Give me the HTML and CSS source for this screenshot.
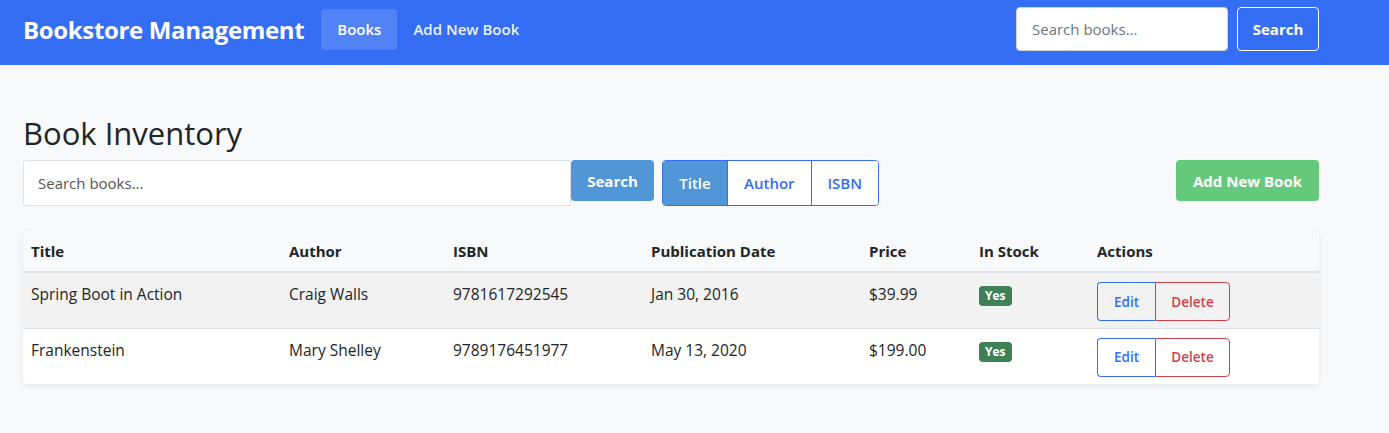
FILE: index.html
```html
<!DOCTYPE html>
<html lang="en">
<head>
<meta charset="utf-8">
<title>Bookstore Management</title>
<link rel="stylesheet" href="styles.css">
</head>
<body>
<nav class="navbar">
  <div class="nav-left">
    <a class="brand" href="#">Bookstore Management</a>
    <a class="nav-link active" href="#">Books</a>
    <a class="nav-link" href="#">Add New Book</a>
  </div>
  <form class="nav-search">
    <input class="nav-input" type="text" placeholder="Search books...">
    <button class="nav-btn" type="button">Search</button>
  </form>
</nav>
<main class="container">
  <h1 class="title">Book Inventory</h1>
  <div class="toolbar">
    <div class="search-group">
      <input class="search-input" type="text" placeholder="Search books...">
      <button class="btn btn-search" type="button">Search</button>
      <div class="seg">
        <button class="seg-btn active" type="button">Title</button>
        <button class="seg-btn" type="button">Author</button>
        <button class="seg-btn" type="button">ISBN</button>
      </div>
    </div>
    <button class="btn btn-add" type="button">Add New Book</button>
  </div>
  <div class="table-card">
    <table class="table">
      <thead>
        <tr>
          <th class="c-title">Title</th>
          <th class="c-author">Author</th>
          <th class="c-isbn">ISBN</th>
          <th class="c-date">Publication Date</th>
          <th class="c-price">Price</th>
          <th class="c-stock">In Stock</th>
          <th>Actions</th>
        </tr>
      </thead>
      <tbody>
        <tr class="striped">
          <td>Spring Boot in Action</td>
          <td>Craig Walls</td>
          <td>9781617292545</td>
          <td>Jan 30, 2016</td>
          <td>$39.99</td>
          <td><span class="badge">Yes</span></td>
          <td><div class="actions"><button class="act edit" type="button">Edit</button><button class="act del" type="button">Delete</button></div></td>
        </tr>
        <tr>
          <td>Frankenstein</td>
          <td>Mary Shelley</td>
          <td>9789176451977</td>
          <td>May 13, 2020</td>
          <td>$199.00</td>
          <td><span class="badge">Yes</span></td>
          <td><div class="actions"><button class="act edit" type="button">Edit</button><button class="act del" type="button">Delete</button></div></td>
        </tr>
      </tbody>
    </table>
  </div>
</main>
</body>
</html>
```
FILE: styles.css
```css
* { box-sizing: border-box; }
html, body { margin: 0; padding: 0; }
body {
  background: #f8f9fa;
  font-family: "Open Sans", "Noto Sans", sans-serif;
  color: #212529;
  font-size: 15px;
}
button, input { font-family: inherit; }

.navbar {
  height: 65px;
  background: #346ef5;
  display: flex;
  align-items: center;
  justify-content: space-between;
  padding: 0 70px 7px 23px;
}
.nav-left { display: flex; align-items: center; }
.brand {
  color: #fff;
  font-weight: 700;
  font-size: 24px;
  text-decoration: none;
  margin-right: 17px;
  letter-spacing: -0.35px;
}
.nav-link {
  color: rgba(255,255,255,0.92);
  font-weight: 600;
  font-size: 15px;
  text-decoration: none;
  padding: 0 16px;
  height: 41px;
  line-height: 41px;
  border-radius: 4px;
}
.nav-link.active { background: rgba(255,255,255,0.15); color: #fff; }
.nav-search { display: flex; gap: 9px; }
.nav-input {
  width: 212px;
  height: 44px;
  border: 1px solid #ced4da;
  border-radius: 4px;
  padding: 0 15px;
  font-size: 15px;
}
.nav-input::placeholder { color: #6c757d; }
.nav-btn {
  width: 82px;
  height: 44px;
  background: transparent;
  border: 1px solid #fff;
  border-radius: 4px;
  color: #fff;
  font-weight: 700;
  font-size: 15px;
}

.container { padding: 47px 70px 40px 23px; }
.title {
  margin: 0 0 5px;
  font-weight: 500;
  font-size: 31px;
  line-height: 43px;
  color: #212529;
}
.toolbar { display: flex; justify-content: space-between; align-items: flex-start; }
.search-group { display: flex; align-items: flex-start; }
.search-input {
  width: 548px;
  height: 46px;
  border: 1px solid #dee2e6;
  border-radius: 3px 0 0 3px;
  padding: 0 14px;
  font-size: 15px;
  background: #fff;
}
.search-input::placeholder { color: #555; }
.btn {
  border: 0;
  border-radius: 4px;
  color: #fff;
  font-weight: 700;
  font-size: 15px;
  height: 41px;
}
.btn-search { background: #5196d6; width: 83px; margin-right: 8px; }
.btn-add { background: #64c97b; width: 143px; }
.seg { display: flex; border: 1px solid #346ef5; border-radius: 4px; overflow: hidden; height: 46px; }
.seg-btn {
  background: #fff;
  border: 0;
  border-left: 1px solid #346ef5;
  color: #346ef5;
  font-weight: 600;
  font-size: 15px;
  padding: 0 16px;
}
.seg-btn:first-child { border-left: 0; }
.seg-btn.active { background: #5196d6; color: #fff; width: 64px; }

.table-card {
  margin-top: 25px;
  background: #fff;
  border-radius: 4px;
  box-shadow: 0 2px 6px rgba(0,0,0,0.08);
  overflow: hidden;
}
.table { width: 100%; border-collapse: collapse; }
.table th {
  background: #f8f9fa;
  text-align: left;
  font-weight: 700;
  font-size: 15px;
  color: #212529;
  height: 41px;
  padding: 0 8px;
  border-bottom: 2px solid #dee2e6;
}
.table td {
  height: 56px;
  padding: 0 8px;
  font-size: 15.5px;
  vertical-align: top;
  padding-top: 10px;
}
.table tbody tr + tr td { border-top: 1px solid #dee2e6; }
.table tr.striped td { background: #f2f2f2; }
.c-title { width: 258px; }
.c-author { width: 164px; }
.c-isbn { width: 198px; }
.c-date { width: 218px; }
.c-price { width: 110px; }
.c-stock { width: 118px; }
.badge {
  display: inline-block;
  background: #3f8055;
  color: #fff;
  font-weight: 700;
  font-size: 12px;
  line-height: 20px;
  padding: 0 6px;
  border-radius: 4px;
  margin-top: 1px;
}
.actions { display: flex; margin-top: -1px; }
.act {
  background: transparent;
  height: 39px;
  font-size: 13.5px;
  font-weight: 600;
  padding: 0;
}
.act.edit { width: 58px; border: 1px solid #346ef5; border-right: 0; color: #346ef5; border-radius: 4px 0 0 4px; }
.act.del { width: 75px; border: 1px solid #d0404b; color: #d0404b; border-radius: 0 4px 4px 0; }
```
